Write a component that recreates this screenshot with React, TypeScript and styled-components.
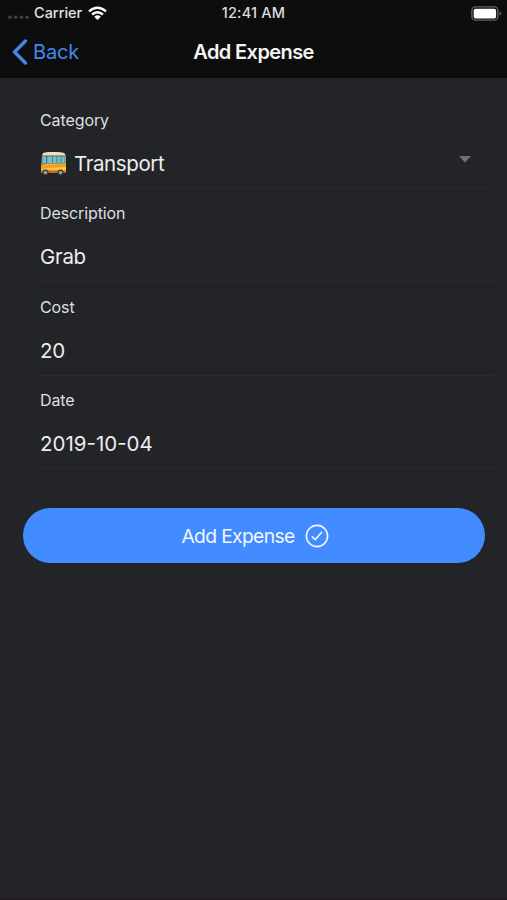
import React from 'react';
import styled, { createGlobalStyle } from 'styled-components';

const GlobalStyle = createGlobalStyle`
  * { box-sizing: border-box; }
  html, body { margin: 0; padding: 0; background: #232428; }
  body { font-family: Inter, "Liberation Sans", sans-serif; color: #ededee; }
`;

const Screen = styled.div`
  width: 507px;
  height: 900px;
  overflow: hidden;
  display: flex;
  flex-direction: column;
  background: #232428;
  border-bottom: 2px solid #211c22;
`;

const Top = styled.div`
  height: 78px;
  flex: none;
  background: #0d0d0d;
`;

const Bar = styled.div<{ $height: number }>`
  display: grid;
  grid-template-columns: 1fr auto 1fr;
  align-items: center;
  height: ${({ $height }) => $height}px;
`;

const Carrier = styled.div`
  display: flex;
  align-items: center;
  padding-left: 8px;
  font-size: 14.5px;
  font-weight: 500;
  line-height: 26px;
  color: #e4e4e4;
  svg { display: block; }
`;

const CarrierName = styled.span`
  margin: 0 6px 0 5px;
`;

const Clock = styled.time`
  font-size: 14.5px;
  font-weight: 500;
  line-height: 26px;
  letter-spacing: 0.2px;
  color: #dcdcdc;
`;

const BatterySlot = styled.div`
  display: flex;
  justify-content: flex-end;
  padding-right: 5px;
`;

const PlainButton = styled.button`
  display: flex;
  align-items: center;
  border: 0;
  padding: 0;
  background: none;
  font-family: inherit;
  cursor: pointer;
`;

const BackButton = styled(PlainButton)`
  gap: 5px;
  padding-left: 12px;
  font-size: 20px;
  line-height: 26px;
  letter-spacing: -0.2px;
  color: #4287ec;
`;

const Title = styled.h1`
  margin: 0;
  font-size: 20px;
  line-height: 26px;
  font-weight: 600;
  letter-spacing: -0.6px;
  color: #f4f4f4;
`;

const Form = styled.form`
  padding: 17.8px 0 0 40px;
`;

const Field = styled.div<{ $short?: boolean }>`
  height: 93.3px;
  padding-top: 13.2px;
  width: ${({ $short }) => ($short ? 448 : 455)}px;
  border-bottom: 1px solid #2a2b2f;
`;

const Label = styled.div`
  font-size: 16px;
  line-height: 22px;
  letter-spacing: -0.1px;
  color: #dedfe0;
`;

const Value = styled.div<{ $spacing?: number }>`
  display: flex;
  align-items: center;
  height: 28px;
  margin-top: 19px;
  font-size: 20.5px;
  line-height: 28px;
  letter-spacing: ${({ $spacing = -0.3 }) => $spacing}px;
  color: #ededee;
`;

const BusIcon = styled.svg`
  margin-right: 6px;
  flex: none;
`;

const Caret = styled.svg`
  margin: 0 17px 9px auto;
`;

const Submit = styled(PlainButton)`
  justify-content: center;
  gap: 10px;
  width: 462px;
  height: 54.5px;
  margin: 39.4px 0 0 -17px;
  padding-left: 2px;
  border-radius: 28px;
  background: #428cff;
  color: #f1f6ff;
  font-size: 19.3px;
  letter-spacing: -0.65px;
`;

const fields = [
  { label: 'Category', value: 'Transport', select: true, spacing: -0.4 },
  { label: 'Description', value: 'Grab' },
  { label: 'Cost', value: '20' },
  { label: 'Date', value: '2019-10-04', spacing: 0 },
];

function Bus() {
  return (
    <BusIcon width="28" height="26" viewBox="0 0 28 26">
      <defs>
        <linearGradient id="body" x1="0" y1="0" x2="0" y2="1">
          <stop offset="0" stopColor="#e9dfb4" />
          <stop offset=".55" stopColor="#f2b92d" />
          <stop offset=".78" stopColor="#ffd43e" />
          <stop offset="1" stopColor="#d76e1c" />
        </linearGradient>
      </defs>
      <path d="M3 2Q14 0 24 2L26 5V20Q26 22 24 22H3Q1 22 1 20L2 5Z" fill="url(#body)" />
      <path d="M3 2Q14 0 24 2L25 4H3Z" fill="#eee0bc" />
      <path d="M2.5 4.5H25.5V12.5H7L2 14Z" fill="#39778a" />
      <path d="M2.8 5.5H6V12L2.5 13ZM7.5 5.5H12V12H7ZM12.8 5.5H16.5V12H12.8ZM17.3 5.5H20.7V12H17.3ZM21.5 5.5H24.7V12H21.5Z" fill="#79bec6" />
      <path d="M1 15L7 13.5H26V16L8 17L1 18Z" fill="#f39b27" />
      <path d="M1 20.5Q12 19 26 20.5V22H1Z" fill="#c96220" />
      <circle cx="5.5" cy="21.5" r="3" fill="#34373b" />
      <circle cx="5.5" cy="21.5" r="1.7" fill="#a3a4a2" />
      <circle cx="20.5" cy="21.5" r="3" fill="#34373b" />
      <circle cx="20.5" cy="21.5" r="1.7" fill="#a3a4a2" />
    </BusIcon>
  );
}

export default function App() {
  return (
    <>
      <GlobalStyle />
      <Screen>
        <Top>
          <Bar $height={26}>
            <Carrier>
              <svg width="21" height="14" viewBox="0 0 21 14" fill="#414141">
                <circle cx="2" cy="11.2" r="1.8" />
                <circle cx="7.7" cy="11.2" r="1.8" />
                <circle cx="13.4" cy="11.2" r="1.8" />
                <circle cx="19" cy="11.2" r="1.8" />
              </svg>
              <CarrierName>Carrier</CarrierName>
              <svg width="19" height="15" viewBox="0 0 19 15" fill="none" stroke="#fff" strokeWidth="2.5">
                <path d="M1 5.4Q9.5-2 18 5.4M4.1 8.5Q9.5 3.9 14.9 8.5" />
                <path d="M6.2 10.7Q9.5 8 12.8 10.7L9.5 14Z" fill="#fff" stroke="none" />
              </svg>
            </Carrier>
            <Clock>12:41 AM</Clock>
            <BatterySlot>
              <svg width="31" height="15" viewBox="0 0 31 15">
                <rect x=".9" y=".9" width="26" height="13.2" rx="3.6" fill="none" stroke="#626262" strokeWidth="1.4" />
                <rect x="2.7" y="2.7" width="22.4" height="9.8" rx="2" fill="#fff" />
                <path d="M28.6 5.5Q30.5 6 30.5 7.5Q30.5 9 28.6 9.5Z" fill="#626262" />
              </svg>
            </BatterySlot>
          </Bar>
          <Bar $height={52}>
            <BackButton type="button">
              <svg width="16" height="26" viewBox="0 0 16 26" fill="none" stroke="#4287ec" strokeWidth="3.4" strokeLinecap="round" strokeLinejoin="round">
                <path d="M13.5 2L2.5 13L13.5 24" />
              </svg>
              Back
            </BackButton>
            <Title>Add Expense</Title>
          </Bar>
        </Top>
        <Form>
          {fields.map(({ label, value, select, spacing }) => (
            <Field key={label} $short={select}>
              <Label>{label}</Label>
              <Value $spacing={spacing}>
                {select && <Bus />}
                {value}
                {select && (
                  <Caret width="12" height="7" viewBox="0 0 12 7">
                    <path d="M0 0H12L6 6.5Z" fill="#707174" />
                  </Caret>
                )}
              </Value>
            </Field>
          ))}
          <Submit type="button">
            Add Expense
            <svg width="24" height="24" viewBox="0 0 24 24" fill="none" stroke="#f1f6ff" strokeWidth="1.6" strokeLinecap="round" strokeLinejoin="round">
              <circle cx="12" cy="12" r="10.6" />
              <path d="M7.3 12.8L10.2 15.6L16.7 8.3" />
            </svg>
          </Submit>
        </Form>
      </Screen>
    </>
  );
}
